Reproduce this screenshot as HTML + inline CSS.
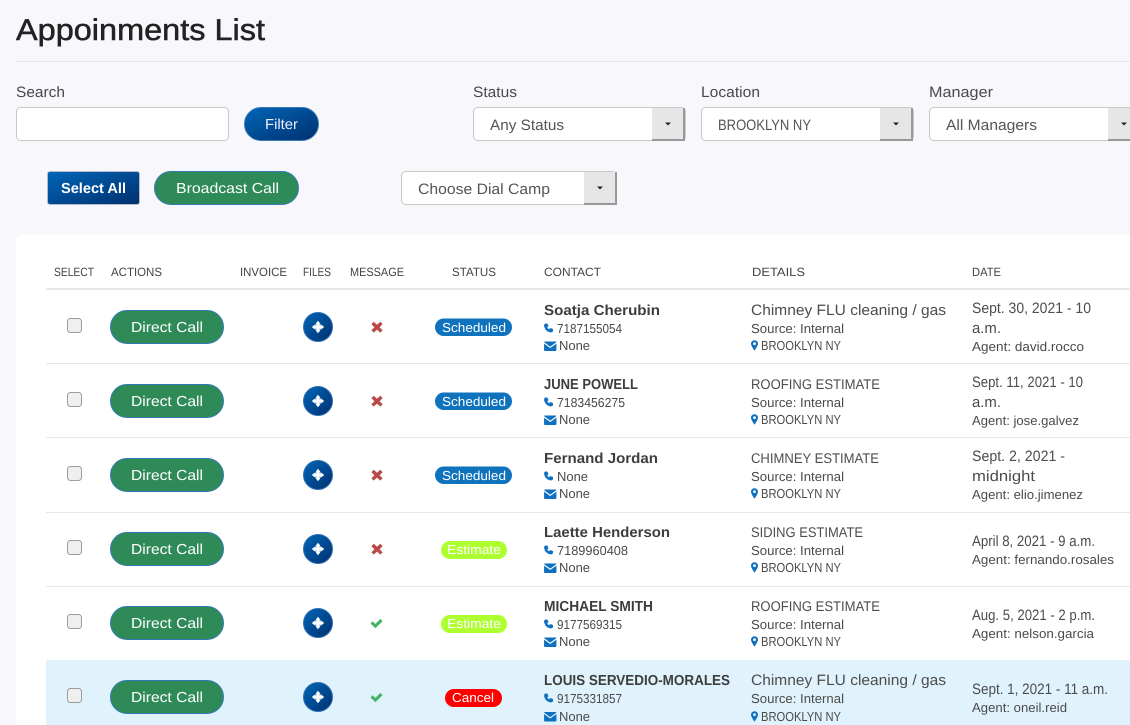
<!DOCTYPE html>
<html lang="en">
<head>
<meta charset="utf-8">
<title>Appoinments List</title>
<style>
html,body{margin:0;padding:0;background:#f7f7fc;width:1130px;height:725px;overflow:hidden}
svg{display:block}
text{font-family:"Liberation Sans",sans-serif;fill:#4a4a4a;text-rendering:geometricPrecision}
.t{font-size:30px;fill:#222;stroke:#222;stroke-width:.5px}
.l{font-size:15px}
.s{font-size:15px;fill:#555}
.h{font-size:12px;fill:#444}
.n{font-size:14.5px;font-weight:bold;fill:#3d3d3d}
.c{font-size:13px}
.d{font-size:15px;fill:#4d4d4d}
.w{fill:#fff;font-size:14.5px}
.b{fill:#fff;font-size:13px}
.dc{fill:#fff;font-size:14.5px}
</style>
</head>
<body>
<svg width="1130" height="725" viewBox="0 0 1130 725" xmlns="http://www.w3.org/2000/svg">
<defs>
<linearGradient id="g" x1="0" y1="0" x2="1" y2="1"><stop offset="0" stop-color="#0066b8"/><stop offset="1" stop-color="#00306e"/></linearGradient>
<symbol id="ph" viewBox="0 0 12 12" overflow="visible"><path fill="#0f6fc0" d="M2.500 0 4.600.2l1.400 3.500-1.700 1.400c.6 1.100 1.500 2 2.600 2.600l1.400-1.700L12 7.400v2.100c0 1.500-1.200 2.500-2.600 2.400C4.200 11.400.6 7.800.1 2.600 0 1.200 1 0 2.500 0z"/></symbol>
<symbol id="ml" viewBox="0 0 13 10" overflow="visible"><path fill="#0f6fc0" d="M1 0h11c.5 0 .9.3 1 .7L6.500 5.400 0 .7C.1.300.5 0 1 0zM0 2.200l6.500 4.600L13 2.200V9c0 .6-.4 1-1 1H1c-.6 0-1-.4-1-1z"/></symbol>
<symbol id="pn" viewBox="0 0 8 12" overflow="visible"><path fill="#0f6fc0" fill-rule="evenodd" d="M4 0C1.800 0 0 1.700 0 3.900 0 6.600 4 12 4 12s4-5.400 4-8.100C8 1.700 6.200 0 4 0zm0 2.300a1.600 1.600 0 1 1 0 3.200 1.600 1.600 0 0 1 0-3.200z"/></symbol>
<g id="rowcommon">
<rect x="67.500" y="318.500" width="14" height="14" rx="3" fill="#efefef" stroke="#9c9c9c"/>
<rect x="110.500" y="310.500" width="113" height="33" rx="16.500" fill="#2e8b57" stroke="#337ab7"/>
<text class="dc" x="131" y="332" textLength="72" lengthAdjust="spacingAndGlyphs">Direct Call</text>
<circle cx="318" cy="327" r="14.500" fill="url(#g)" stroke="#2f6fb0"/>
<path fill="#fff" d="M318 320.800l2.200 2.700-.7 1.900 1.900-.7 2.800 2.300-2.800 2.300-1.900-.7.7 1.900-2.200 2.700-2.200-2.700.7-1.900-1.900.7-2.800-2.300 2.800-2.300 1.900.7-.7-1.900z"/>
<path fill="#7fa6d6" d="M315 324h1.500v1.500H315zM319.500 324h1.500v1.500h-1.500zM315 328.500h1.500v1.500H315zM319.500 328.500h1.500v1.500h-1.500z"/>
</g>
<path id="xx" fill="#b94a48" d="M373.700 321.800l3.300 3 3.300-3 2.300 2.300-3 3.100 3 3.100-2.300 2.300-3.300-3-3.300 3-2.300-2.300 3-3.100-3-3.100z"/>
<path id="ck" fill="#45b565" d="M370.500 623.500l2.200-2.200 2.700 2.600 5-5 2.200 2.200-7.200 7.200z"/>
</defs>

<text class="t" x="16" y="40" textLength="249" lengthAdjust="spacingAndGlyphs">Appoinments List</text>
<rect x="16" y="61" width="1114" height="1" fill="#e6e6ee"/>

<text class="l" x="16" y="97" textLength="49" lengthAdjust="spacingAndGlyphs">Search</text>
<rect x="16.500" y="107.500" width="212" height="33" rx="4" fill="#fff" stroke="#c8c8c8"/>
<rect x="244.500" y="107.500" width="74" height="33" rx="16.500" fill="url(#g)" stroke="#337ab7"/>
<text class="w" x="265" y="129" textLength="33" lengthAdjust="spacingAndGlyphs" style="fill:#eef">Filter</text>

<text class="l" x="473" y="97" textLength="44" lengthAdjust="spacingAndGlyphs">Status</text>
<rect x="473.500" y="107.500" width="212" height="33" rx="4" fill="#fff" stroke="#c8c8c8"/>
<rect x="652" y="108" width="33" height="33" fill="#e6e6e6"/><rect x="683" y="108" width="2" height="33" fill="#999"/><rect x="652" y="139" width="33" height="2" fill="#999"/>
<path d="M665 122.500h6l-3 3z" fill="#222"/>
<text class="s" x="490" y="130" textLength="74" lengthAdjust="spacingAndGlyphs">Any Status</text>

<text class="l" x="701" y="97" textLength="59" lengthAdjust="spacingAndGlyphs">Location</text>
<rect x="701.500" y="107.500" width="212" height="33" rx="4" fill="#fff" stroke="#c8c8c8"/>
<rect x="880" y="108" width="33" height="33" fill="#e6e6e6"/><rect x="911" y="108" width="2" height="33" fill="#999"/><rect x="880" y="139" width="33" height="2" fill="#999"/>
<path d="M893 122.500h6l-3 3z" fill="#222"/>
<text class="s" x="718" y="130" textLength="93" lengthAdjust="spacingAndGlyphs">BROOKLYN NY</text>

<text class="l" x="929" y="97" textLength="64" lengthAdjust="spacingAndGlyphs">Manager</text>
<rect x="929.500" y="107.500" width="212" height="33" rx="4" fill="#fff" stroke="#c8c8c8"/>
<rect x="1108" y="108" width="33" height="33" fill="#e6e6e6"/><rect x="1108" y="139" width="33" height="2" fill="#999"/>
<path d="M1121 122.500h6l-3 3z" fill="#222"/>
<text class="s" x="946" y="130" textLength="91" lengthAdjust="spacingAndGlyphs">All Managers</text>

<rect x="47.500" y="171.500" width="92" height="33" rx="2.500" fill="url(#g)" stroke="#b4bccb"/>
<text class="w" x="61" y="193" textLength="65" lengthAdjust="spacingAndGlyphs" style="font-weight:bold">Select All</text>
<rect x="154.500" y="171.500" width="144" height="33" rx="16.500" fill="#2e8b57" stroke="#337ab7"/>
<text class="dc" x="176" y="193" textLength="103" lengthAdjust="spacingAndGlyphs">Broadcast Call</text>
<rect x="401.500" y="171.500" width="215" height="33" rx="4" fill="#fff" stroke="#c8c8c8"/>
<rect x="584" y="172" width="33" height="33" fill="#e6e6e6"/><rect x="615" y="172" width="2" height="33" fill="#999"/><rect x="584" y="203" width="33" height="2" fill="#999"/>
<path d="M597 186.500h6l-3 3z" fill="#222"/>
<text class="s" x="418" y="194" textLength="132" lengthAdjust="spacingAndGlyphs">Choose Dial Camp</text>

<rect x="16" y="235" width="1130" height="500" rx="6" fill="#fff"/>
<text class="h" x="54" y="276" textLength="40" lengthAdjust="spacingAndGlyphs">SELECT</text>
<text class="h" x="111" y="276" textLength="51" lengthAdjust="spacingAndGlyphs">ACTIONS</text>
<text class="h" x="240" y="276" textLength="47" lengthAdjust="spacingAndGlyphs">INVOICE</text>
<text class="h" x="303" y="276" textLength="28" lengthAdjust="spacingAndGlyphs">FILES</text>
<text class="h" x="350" y="276" textLength="54" lengthAdjust="spacingAndGlyphs">MESSAGE</text>
<text class="h" x="452" y="276" textLength="44" lengthAdjust="spacingAndGlyphs">STATUS</text>
<text class="h" x="544" y="276" textLength="57" lengthAdjust="spacingAndGlyphs">CONTACT</text>
<text class="h" x="752" y="276" textLength="53" lengthAdjust="spacingAndGlyphs">DETAILS</text>
<text class="h" x="972" y="276" textLength="29" lengthAdjust="spacingAndGlyphs">DATE</text>

<rect x="46" y="288" width="1084" height="2" fill="#e8e8e8"/>
<rect x="46" y="363" width="1084" height="1" fill="#e8e8e8"/>
<rect x="46" y="437" width="1084" height="1" fill="#e8e8e8"/>
<rect x="46" y="512" width="1084" height="1" fill="#e8e8e8"/>
<rect x="46" y="586" width="1084" height="1" fill="#e8e8e8"/>
<rect x="46" y="660" width="1084" height="65" fill="#e0f3fd"/>

<!-- Row 1 -->
<use href="#rowcommon"/>
<use href="#xx"/>
<rect x="435" y="318.500" width="77" height="17.500" rx="8.750" fill="#0f72bd"/>
<text class="b" x="442" y="332" textLength="64" lengthAdjust="spacingAndGlyphs">Scheduled</text>
<text class="n" x="544" y="315" textLength="116" lengthAdjust="spacingAndGlyphs">Soatja Cherubin</text>
<use href="#ph" x="544" y="323" width="9" height="10"/>
<text class="c" x="557" y="333" textLength="65" lengthAdjust="spacingAndGlyphs">7187155054</text>
<use href="#ml" x="544" y="341.500" width="12.500" height="9.500"/>
<text class="c" x="559" y="350" textLength="31" lengthAdjust="spacingAndGlyphs">None</text>
<text class="d" x="751" y="315" textLength="195" lengthAdjust="spacingAndGlyphs">Chimney FLU cleaning / gas</text>
<text class="c" x="751" y="333" textLength="93" lengthAdjust="spacingAndGlyphs">Source: Internal</text>
<use href="#pn" x="751" y="340" width="7" height="11"/>
<text class="c" x="761" y="350" textLength="80" lengthAdjust="spacingAndGlyphs">BROOKLYN NY</text>
<text class="d" x="972" y="313" textLength="119" lengthAdjust="spacingAndGlyphs">Sept. 30, 2021 - 10</text>
<text class="d" x="972" y="333" textLength="29" lengthAdjust="spacingAndGlyphs">a.m.</text>
<text class="c" x="972" y="351" textLength="112" lengthAdjust="spacingAndGlyphs">Agent: david.rocco</text>

<!-- Row 2 -->
<use href="#rowcommon" y="74"/>
<use href="#xx" y="74"/>
<rect x="435" y="392.500" width="77" height="17.500" rx="8.750" fill="#0f72bd"/>
<text class="b" x="442" y="406" textLength="64" lengthAdjust="spacingAndGlyphs">Scheduled</text>
<text class="n" x="544" y="389" textLength="94" lengthAdjust="spacingAndGlyphs">JUNE POWELL</text>
<use href="#ph" x="544" y="397" width="9" height="10"/>
<text class="c" x="557" y="407" textLength="68" lengthAdjust="spacingAndGlyphs">7183456275</text>
<use href="#ml" x="544" y="415.500" width="12.500" height="9.500"/>
<text class="c" x="559" y="424" textLength="31" lengthAdjust="spacingAndGlyphs">None</text>
<text class="d" x="751" y="389" textLength="129" lengthAdjust="spacingAndGlyphs" style="font-size:14px">ROOFING ESTIMATE</text>
<text class="c" x="751" y="407" textLength="93" lengthAdjust="spacingAndGlyphs">Source: Internal</text>
<use href="#pn" x="751" y="414" width="7" height="11"/>
<text class="c" x="761" y="424" textLength="80" lengthAdjust="spacingAndGlyphs">BROOKLYN NY</text>
<text class="d" x="972" y="387" textLength="111" lengthAdjust="spacingAndGlyphs">Sept. 11, 2021 - 10</text>
<text class="d" x="972" y="407" textLength="29" lengthAdjust="spacingAndGlyphs">a.m.</text>
<text class="c" x="972" y="425" textLength="107" lengthAdjust="spacingAndGlyphs">Agent: jose.galvez</text>

<!-- Row 3 -->
<use href="#rowcommon" y="148"/>
<use href="#xx" y="148"/>
<rect x="435" y="466.500" width="77" height="17.500" rx="8.750" fill="#0f72bd"/>
<text class="b" x="442" y="480" textLength="64" lengthAdjust="spacingAndGlyphs">Scheduled</text>
<text class="n" x="544" y="463" textLength="114" lengthAdjust="spacingAndGlyphs">Fernand Jordan</text>
<use href="#ph" x="544" y="471" width="9" height="10"/>
<text class="c" x="557" y="481" textLength="31" lengthAdjust="spacingAndGlyphs">None</text>
<use href="#ml" x="544" y="489.500" width="12.500" height="9.500"/>
<text class="c" x="559" y="498" textLength="31" lengthAdjust="spacingAndGlyphs">None</text>
<text class="d" x="751" y="463" textLength="128" lengthAdjust="spacingAndGlyphs" style="font-size:14px">CHIMNEY ESTIMATE</text>
<text class="c" x="751" y="481" textLength="93" lengthAdjust="spacingAndGlyphs">Source: Internal</text>
<use href="#pn" x="751" y="488" width="7" height="11"/>
<text class="c" x="761" y="498" textLength="80" lengthAdjust="spacingAndGlyphs">BROOKLYN NY</text>
<text class="d" x="972" y="461" textLength="93" lengthAdjust="spacingAndGlyphs">Sept. 2, 2021 -</text>
<text class="d" x="972" y="481" textLength="63" lengthAdjust="spacingAndGlyphs">midnight</text>
<text class="c" x="972" y="499" textLength="111" lengthAdjust="spacingAndGlyphs">Agent: elio.jimenez</text>

<!-- Row 4 -->
<use href="#rowcommon" y="222"/>
<use href="#xx" y="222"/>
<rect x="441" y="541" width="66" height="18" rx="9" fill="#adff2f"/>
<text class="b" x="447" y="554" textLength="54" lengthAdjust="spacingAndGlyphs">Estimate</text>
<text class="n" x="544" y="537" textLength="126" lengthAdjust="spacingAndGlyphs">Laette Henderson</text>
<use href="#ph" x="544" y="545" width="9" height="10"/>
<text class="c" x="557" y="555" textLength="71" lengthAdjust="spacingAndGlyphs">7189960408</text>
<use href="#ml" x="544" y="563.500" width="12.500" height="9.500"/>
<text class="c" x="559" y="572" textLength="31" lengthAdjust="spacingAndGlyphs">None</text>
<text class="d" x="751" y="537" textLength="112" lengthAdjust="spacingAndGlyphs" style="font-size:14px">SIDING ESTIMATE</text>
<text class="c" x="751" y="555" textLength="93" lengthAdjust="spacingAndGlyphs">Source: Internal</text>
<use href="#pn" x="751" y="562" width="7" height="11"/>
<text class="c" x="761" y="572" textLength="80" lengthAdjust="spacingAndGlyphs">BROOKLYN NY</text>
<text class="d" x="972" y="546" textLength="123" lengthAdjust="spacingAndGlyphs">April 8, 2021 - 9 a.m.</text>
<text class="c" x="972" y="564" textLength="142" lengthAdjust="spacingAndGlyphs">Agent: fernando.rosales</text>

<!-- Row 5 -->
<use href="#rowcommon" y="296"/>
<use href="#ck"/>
<rect x="441" y="615" width="66" height="18" rx="9" fill="#adff2f"/>
<text class="b" x="447" y="628" textLength="54" lengthAdjust="spacingAndGlyphs">Estimate</text>
<text class="n" x="544" y="611" textLength="109" lengthAdjust="spacingAndGlyphs">MICHAEL SMITH</text>
<use href="#ph" x="544" y="619" width="9" height="10"/>
<text class="c" x="557" y="629" textLength="65" lengthAdjust="spacingAndGlyphs">9177569315</text>
<use href="#ml" x="544" y="637.500" width="12.500" height="9.500"/>
<text class="c" x="559" y="646" textLength="31" lengthAdjust="spacingAndGlyphs">None</text>
<text class="d" x="751" y="611" textLength="129" lengthAdjust="spacingAndGlyphs" style="font-size:14px">ROOFING ESTIMATE</text>
<text class="c" x="751" y="629" textLength="93" lengthAdjust="spacingAndGlyphs">Source: Internal</text>
<use href="#pn" x="751" y="636" width="7" height="11"/>
<text class="c" x="761" y="646" textLength="80" lengthAdjust="spacingAndGlyphs">BROOKLYN NY</text>
<text class="d" x="972" y="620" textLength="123" lengthAdjust="spacingAndGlyphs">Aug. 5, 2021 - 2 p.m.</text>
<text class="c" x="972" y="638" textLength="122" lengthAdjust="spacingAndGlyphs">Agent: nelson.garcia</text>

<!-- Row 6 -->
<use href="#rowcommon" y="370"/>
<use href="#ck" y="74"/>
<rect x="445" y="689" width="57" height="18" rx="9" fill="#ff0000"/>
<text class="b" x="452" y="702" textLength="42" lengthAdjust="spacingAndGlyphs">Cancel</text>
<text class="n" x="544" y="685" textLength="186" lengthAdjust="spacingAndGlyphs">LOUIS SERVEDIO-MORALES</text>
<use href="#ph" x="544" y="693" width="9" height="10"/>
<text class="c" x="557" y="703" textLength="65" lengthAdjust="spacingAndGlyphs">9175331857</text>
<use href="#ml" x="544" y="712" width="12.500" height="9.500"/>
<text class="c" x="559" y="721" textLength="31" lengthAdjust="spacingAndGlyphs">None</text>
<text class="d" x="751" y="685" textLength="195" lengthAdjust="spacingAndGlyphs">Chimney FLU cleaning / gas</text>
<text class="c" x="751" y="703" textLength="93" lengthAdjust="spacingAndGlyphs">Source: Internal</text>
<use href="#pn" x="751" y="711" width="7" height="11"/>
<text class="c" x="761" y="721" textLength="80" lengthAdjust="spacingAndGlyphs">BROOKLYN NY</text>
<text class="d" x="972" y="694" textLength="136" lengthAdjust="spacingAndGlyphs">Sept. 1, 2021 - 11 a.m.</text>
<text class="c" x="972" y="712" textLength="95" lengthAdjust="spacingAndGlyphs">Agent: oneil.reid</text>
</svg>
</body>
</html>
